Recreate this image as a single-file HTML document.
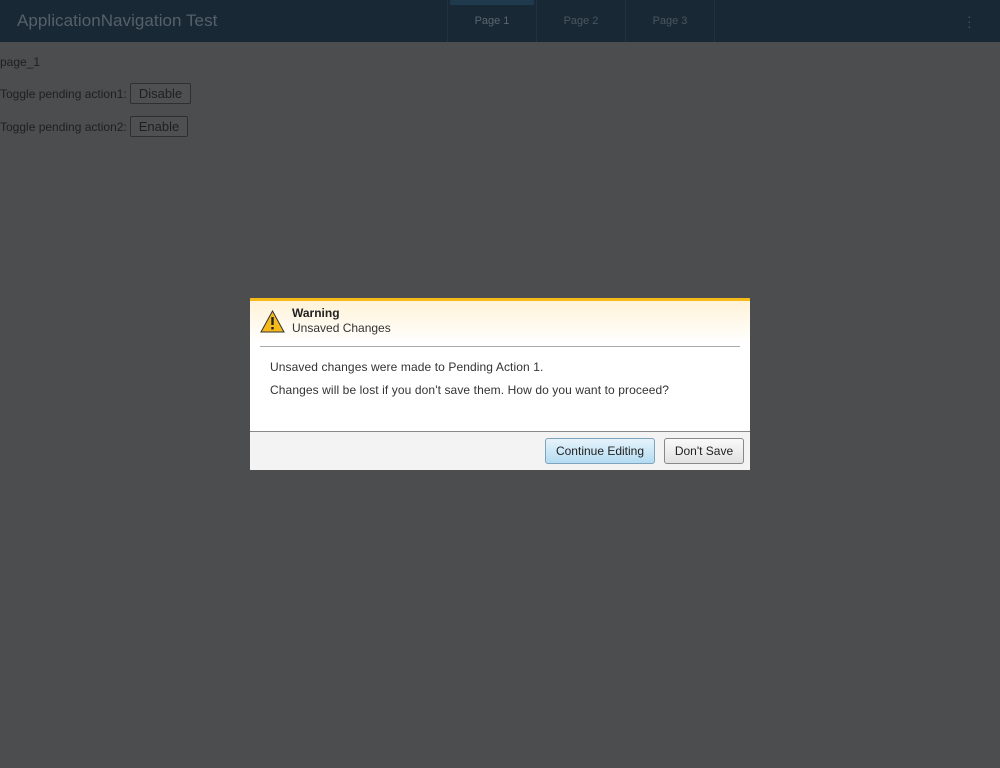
<!DOCTYPE html>
<html><head><style>
body{margin:0;width:1000px;height:768px;background:#4c4d4f;font-family:"Liberation Sans",sans-serif;position:relative;overflow:hidden}
.hdr{position:absolute;left:0;top:0;width:1000px;height:42px;background:#182834}
.title{position:absolute;left:17px;top:11px;font-size:17px;color:#55606a;letter-spacing:0.05px}
.tab{position:absolute;top:0;height:42px;width:88px;border-left:1px solid #223240;font-size:11px;color:#4a5660;text-align:center;line-height:42px}
.t{position:absolute;font-size:12px;color:#1e1f20}
.b{position:absolute;height:19px;border:1px solid #2e2f30;background:#4f5052;border-radius:2px;font-size:13px;line-height:19px;color:#1e1f20;text-align:center}
.dlg{position:absolute;left:250px;top:298px;width:500px;height:172px;background:#fff;border-top:3px solid #f6b91a;box-sizing:border-box}
.hd{height:42px;background:linear-gradient(#fff3d8,#fff)}
.btn{position:absolute;top:137px;height:26px;border:1px solid #888;border-radius:3px;font-size:12px;line-height:24px;text-align:center;color:#222;box-sizing:border-box}
.m{position:absolute;left:20px;font-size:12px;color:#333;letter-spacing:0.1px}
</style></head><body>
<div class="hdr"><div class="title">ApplicationNavigation Test</div>
<div class="tab" style="left:447px;color:#5a6670">Page 1<div style="position:absolute;left:2px;top:0;width:84px;height:5px;background:#1f3a4c"></div></div>
<div class="tab" style="left:536px">Page 2</div>
<div class="tab" style="left:625px;border-right:1px solid #223240">Page 3</div>
<div style="position:absolute;left:967px;top:14px;color:#4a5660;font-size:14px;line-height:5px;width:4px">·<br>·<br>·</div>
</div>
<div class="t" style="left:0;top:55px">page_1</div>
<div class="t" style="left:0;top:87px">Toggle pending action1:</div>
<div class="b" style="left:130px;top:83px;width:59px">Disable</div>
<div class="t" style="left:0;top:120px">Toggle pending action2:</div>
<div class="b" style="left:130px;top:116px;width:56px">Enable</div>
<div class="dlg">
<div class="hd">
<svg style="position:absolute;left:10px;top:9px" width="25" height="23" viewBox="0 0 25 23"><path d="M12.5 1L24 22H1Z" fill="#f6b91a" stroke="#333" stroke-width="1"/><rect x="11.3" y="7" width="2.4" height="8" fill="#222"/><rect x="11.3" y="17" width="2.4" height="2.4" fill="#222"/></svg>
<div style="position:absolute;left:42px;top:5px;font-size:12px;font-weight:bold;color:#222">Warning</div>
<div style="position:absolute;left:42px;top:20px;font-size:12px;color:#333">Unsaved Changes</div>
</div>
<div style="position:absolute;left:10px;top:45px;width:480px;border-top:1px solid #aaa"></div>
<div class="m" style="top:59px">Unsaved changes were made to Pending Action 1.</div>
<div class="m" style="top:82px">Changes will be lost if you don't save them. How do you want to proceed?</div>
<div style="position:absolute;left:0;top:130px;width:500px;height:39px;background:#f3f3f3;border-top:1px solid #888;box-sizing:border-box"></div>
<div class="btn" style="left:295px;width:110px;background:linear-gradient(#e6f3fb,#b4dcf2);border-color:#7fa4bc">Continue Editing</div>
<div class="btn" style="left:414px;width:80px;background:linear-gradient(#fafafa,#e2e2e2)">Don't Save</div>
</div>
</body></html>
